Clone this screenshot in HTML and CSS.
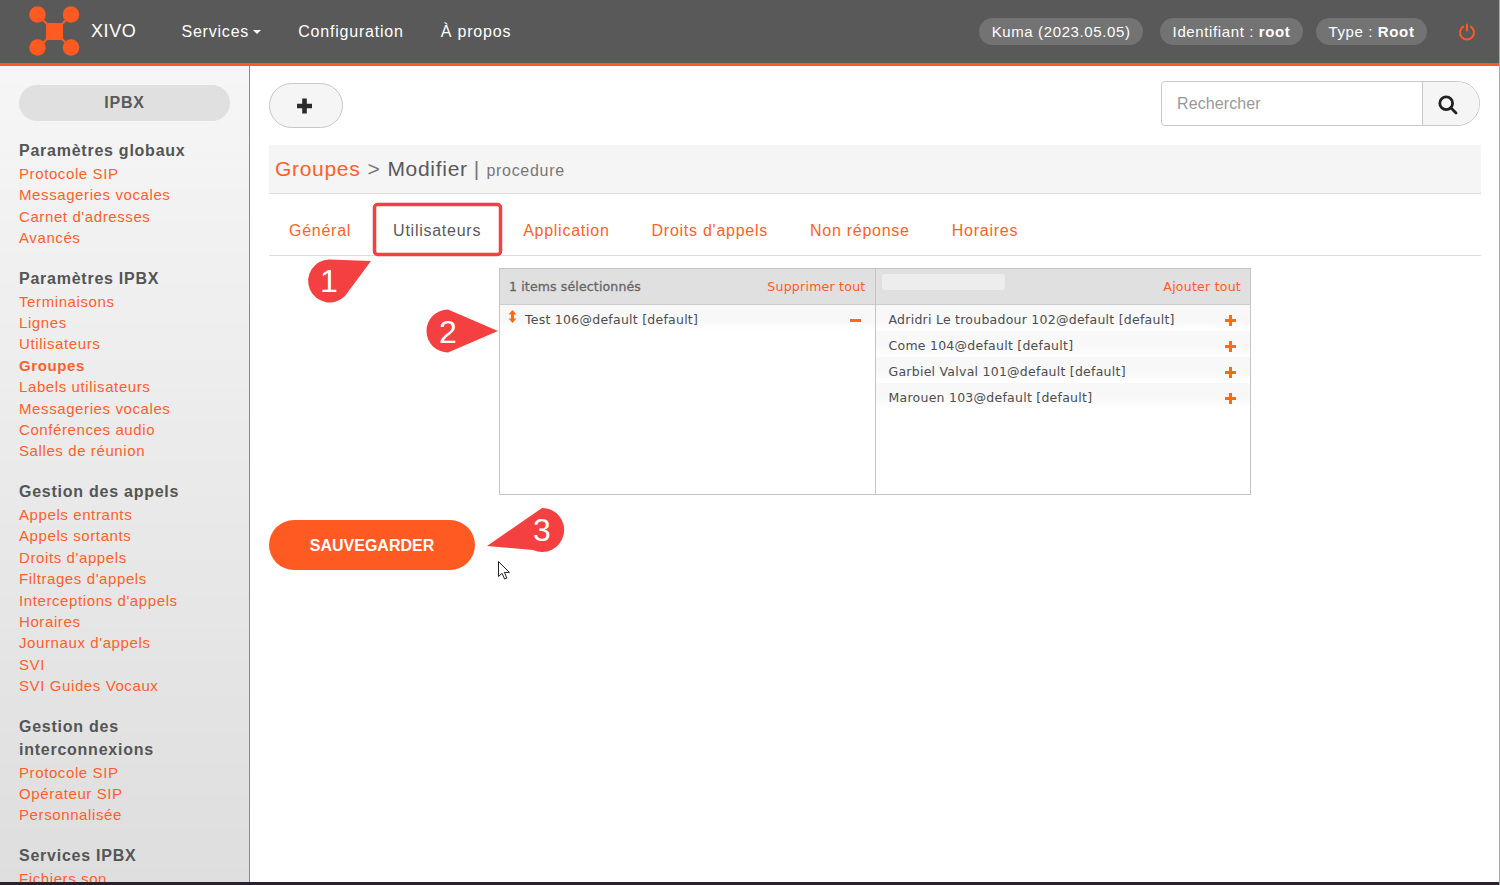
FILE: index.html
```html
<!DOCTYPE html>
<html lang="fr">
  <head>
    <meta charset="UTF-8" />
    <title>XIVO - Groupes</title>
    <link rel="stylesheet" href="styles.css">
  </head>
  <body>
    <div class="page">
      <!-- Top navigation -->
      <header class="topbar">
        <a class="brand">
          <svg class="brand-logo" width="52" height="51" viewBox="0 0 52 51">
            <g stroke="#ff5a22" stroke-width="2"><line x1="8" y1="8" x2="43" y2="43" /><line x1="43" y1="8" x2="8" y2="43" /></g>
            <g fill="#ff5a22">
              <circle cx="8.500" cy="8.500" r="8.300" /><circle cx="42" cy="8.500" r="8.300" /><circle cx="8.500" cy="41.500" r="8.300" /><circle cx="42" cy="41.500" r="8.300" />
              <rect x="17" y="17" width="17" height="17" />
            </g>
          </svg>
          <span>XIVO</span>
        </a>
        <nav class="topnav">
          <a>Services<i class="caret"></i></a>
          <a>Configuration</a>
          <a>À propos</a>
        </nav>
        <div class="topinfo">
          <span class="pill version">Kuma (2023.05.05)</span>
          <span class="pill">Identifiant : <b>root</b></span>
          <span class="pill">Type : <b>Root</b></span>
          <svg class="power" width="18" height="18" viewBox="0 0 18 18" fill="none" stroke="#ff5a22" stroke-width="2" stroke-linecap="round">
            <path d="M5.200 3.600a7 7 0 1 0 7.600 0" /><line x1="9" y1="1.500" x2="9" y2="7.500" />
          </svg>
        </div>
      </header>

      <div class="layout">
        <!-- Left menu -->
        <aside class="sidebar">
          <div class="side-title">IPBX</div>
          <section class="side-group">
            <h4>Paramètres globaux</h4>
            <a>Protocole SIP</a>
            <a>Messageries vocales</a>
            <a>Carnet d'adresses</a>
            <a>Avancés</a>
          </section>
          <section class="side-group">
            <h4>Paramètres IPBX</h4>
            <a>Terminaisons</a>
            <a>Lignes</a>
            <a>Utilisateurs</a>
            <a class="active">Groupes</a>
            <a>Labels utilisateurs</a>
            <a>Messageries vocales</a>
            <a>Conférences audio</a>
            <a>Salles de réunion</a>
          </section>
          <section class="side-group">
            <h4>Gestion des appels</h4>
            <a>Appels entrants</a>
            <a>Appels sortants</a>
            <a>Droits d'appels</a>
            <a>Filtrages d'appels</a>
            <a>Interceptions d'appels</a>
            <a>Horaires</a>
            <a>Journaux d'appels</a>
            <a>SVI</a>
            <a>SVI Guides Vocaux</a>
          </section>
          <section class="side-group">
            <h4>Gestion des interconnexions</h4>
            <a>Protocole SIP</a>
            <a>Opérateur SIP</a>
            <a>Personnalisée</a>
          </section>
          <section class="side-group">
            <h4>Services IPBX</h4>
            <a>Fichiers son</a>
          </section>
        </aside>

        <main class="content">
          <div class="toolbar">
            <button class="btn-add">
              <svg width="17" height="16" viewBox="0 0 17 16"><path d="M6.200 .5h4.600v5.200H16v4.600h-5.200v5.200H6.200v-5.200H1V5.700h5.200z" fill="#2b2b2b" /></svg>
            </button>
            <div class="search">
              <span class="search-input">Rechercher</span>
              <span class="search-btn">
                <svg width="20" height="20" viewBox="0 0 20 20" fill="none" stroke="#222" stroke-width="2.800" stroke-linecap="round">
                  <circle cx="8.200" cy="8.200" r="6.400" /><line x1="12.800" y1="12.800" x2="18" y2="18" />
                </svg>
              </span>
            </div>
          </div>

          <div class="crumb">
            <a>Groupes</a><span class="sep">&gt;</span><span class="crumb-page">Modifier</span><span class="crumb-sub">| <small>procedure</small></span>
          </div>

          <ul class="tabs">
            <li>Général</li>
            <li class="current">Utilisateurs</li>
            <li>Application</li>
            <li>Droits d'appels</li>
            <li>Non réponse</li>
            <li>Horaires</li>
          </ul>

          <!-- Two-column item picker -->
          <div class="picker">
            <div class="picker-col">
              <div class="picker-head">
                <span class="count">1 items sélectionnés</span>
                <a>Supprimer tout</a>
              </div>
              <ul class="picker-list">
                <li>
                  <svg class="drag" width="9" height="13" viewBox="0 0 9 13"><path d="M4.500 0L8.500 4.500H6v4h2.500L4.500 13 .5 8.500H3v-4H.5z" fill="#ff6a13" /></svg>
                  <span>Test 106@default [default]</span>
                  <svg class="act" width="11" height="11" viewBox="0 0 11 11"><rect y="4" width="11" height="3" fill="#ff6a13" /></svg>
                </li>
              </ul>
            </div>
            <div class="picker-col">
              <div class="picker-head">
                <span class="filter"></span>
                <a>Ajouter tout</a>
              </div>
              <ul class="picker-list">
                <li><span>Adridri Le troubadour 102@default [default]</span><svg class="act" width="11" height="11" viewBox="0 0 11 11"><path d="M4 0h3v4h4v3H7v4H4V7H0V4h4z" fill="#ff6a13" /></svg></li>
                <li><span>Come 104@default [default]</span><svg class="act" width="11" height="11" viewBox="0 0 11 11"><path d="M4 0h3v4h4v3H7v4H4V7H0V4h4z" fill="#ff6a13" /></svg></li>
                <li><span>Garbiel Valval 101@default [default]</span><svg class="act" width="11" height="11" viewBox="0 0 11 11"><path d="M4 0h3v4h4v3H7v4H4V7H0V4h4z" fill="#ff6a13" /></svg></li>
                <li><span>Marouen 103@default [default]</span><svg class="act" width="11" height="11" viewBox="0 0 11 11"><path d="M4 0h3v4h4v3H7v4H4V7H0V4h4z" fill="#ff6a13" /></svg></li>
              </ul>
            </div>
          </div>

          <button class="btn-save">SAUVEGARDER</button>
        </main>
      </div>
      <div class="taskbar"></div>

      <!-- Annotations drawn over the screenshot -->
      <svg class="notes" width="1500" height="885" viewBox="0 0 1500 885">
        <rect class="note-box" x="374.500" y="204.500" width="126" height="50" rx="3" />
        <g class="note-mark">
          <path d="M329 259.500L371 261 345 296A21.500 21.500 0 1 1 329 259.500z" />
          <path d="M448 309.500L498 331 448 352.500A21.500 21.500 0 0 1 448 309.500z" />
          <path d="M542 508A22 22 0 1 1 533 550L487 546z" />
        </g>
        <g class="note-num">
          <text x="329" y="292">1</text>
          <text x="448" y="343">2</text>
          <text x="542" y="541">3</text>
        </g>
        <path class="cursor" d="M498.500 561.500v15l3.600-3.200 2.500 5.700 2.300-1-2.500-5.600h5z" />
      </svg>
    </div>
  </body>
</html>
```

FILE: styles.css
```css
* {
  box-sizing: border-box;
}

body {
  margin: 0;
  font-family: "Liberation Sans", Arial, sans-serif;
  background: #fff;
  overflow: hidden;
}

a {
  color: #ff5f2a;
}

ul {
  list-style: none;
  margin: 0;
  padding: 0;
}

.page {
  position: relative;
  display: flex;
  flex-direction: column;
  width: 1500px;
  height: 885px;
  overflow: hidden;
  border-right: 1px solid #a8a8a8;
}

/* Top navigation */
.topbar {
  display: flex;
  align-items: center;
  flex: none;
  height: 66px;
  padding: 0 23px 0 29px;
  background: #595959;
  border-bottom: 3px solid #ff5a22;
  color: #fff;
}

.brand {
  display: flex;
  align-items: center;
  color: #fff;
  font-size: 18px;
  letter-spacing: 0.6px;
}

.brand-logo {
  margin-right: 10px;
}

.topnav {
  display: flex;
  gap: 37px;
  margin-left: 45px;
}

.topnav a {
  color: #fff;
  font-size: 16px;
  letter-spacing: 0.8px;
}

.caret {
  display: inline-block;
  margin-left: 4px;
  vertical-align: 3px;
  border-top: 4px solid #fff;
  border-left: 4.500px solid transparent;
  border-right: 4.500px solid transparent;
}

.topinfo {
  display: flex;
  align-items: center;
  gap: 13px;
  margin-left: auto;
}

.pill {
  height: 27px;
  padding: 0 12.500px;
  border-radius: 14px;
  background: #737373;
  font-size: 15px;
  line-height: 27px;
  letter-spacing: 0.62px;
}

.pill.version {
  margin-right: 4px;
}

.power {
  margin-left: 18px;
}

/* Left menu */
.layout {
  display: flex;
  flex: 1;
  min-height: 0;
}

.sidebar {
  flex: none;
  width: 250px;
  padding: 19px 19px 0;
  overflow: hidden;
  background: linear-gradient(#f6f6f6, #dedede);
  border-right: 1px solid #f0653a;
}

.side-title {
  width: 211px;
  height: 36px;
  margin-bottom: 18px;
  border-radius: 18px;
  background: #e0e0e0;
  color: #595959;
  font-size: 16px;
  font-weight: bold;
  line-height: 35px;
  letter-spacing: 0.8px;
  text-align: center;
}

.side-group {
  margin-bottom: 18px;
}

.side-group h4 {
  margin: 0 0 1px;
  color: #555;
  font-size: 16px;
  line-height: 23px;
  letter-spacing: 0.75px;
}

.side-group a {
  display: block;
  font-size: 15px;
  line-height: 21.400px;
  letter-spacing: 0.6px;
}

.side-group a.active {
  font-weight: bold;
}

/* Main column */
.content {
  flex: 1;
  min-width: 0;
  padding: 15px 18px 0 19px;
}

.toolbar {
  display: flex;
  align-items: flex-start;
  justify-content: space-between;
  height: 64px;
}

.btn-add {
  display: flex;
  align-items: center;
  justify-content: center;
  width: 74px;
  height: 45px;
  margin-top: 2px;
  padding: 0 3px 0 0;
  background: #f5f5f5;
  border: 1px solid #c8c8c8;
  border-radius: 23px;
}

.search {
  display: flex;
  width: 319px;
  height: 45px;
  margin-right: 1px;
  border: 1px solid #c8c8c8;
  border-radius: 4px 23px 23px 4px;
  overflow: hidden;
}

.search-input {
  flex: 1;
  padding-left: 15px;
  color: #999;
  font-size: 16px;
  line-height: 43px;
  letter-spacing: 0.1px;
}

.search-btn {
  display: flex;
  align-items: center;
  justify-content: center;
  width: 57px;
  padding: 3px 7px 0 0;
  background: #f5f5f5;
  border-left: 1px solid #c8c8c8;
}

.crumb {
  display: flex;
  align-items: baseline;
  height: 49px;
  padding: 12px 6px 0;
  background: #f5f5f5;
  border-bottom: 1px solid #ddd;
  color: #595959;
  font-size: 21px;
  letter-spacing: 0.7px;
}

.sep {
  margin: 0 7px;
  color: #777;
}

.crumb-sub {
  margin-left: 6px;
  color: #777;
}

.crumb-sub small {
  font-size: 16px;
}

.tabs {
  display: flex;
  height: 62px;
  padding-top: 12px;
  border-bottom: 1px solid #ddd;
}

.tabs li {
  height: 49px;
  margin-right: 2px;
  padding: 0 20px;
  color: #ff5f2a;
  font-size: 16px;
  line-height: 50px;
  letter-spacing: 0.74px;
}

.tabs li.current {
  color: #595959;
}

/* Item picker */
.picker {
  display: flex;
  width: 752px;
  height: 227px;
  margin: 12px 0 25px 230px;
  border: 1px solid #c4c4c4;
  font-family: "DejaVu Sans", Verdana, sans-serif;
  font-size: 12.500px;
  letter-spacing: 0.25px;
}

.picker-col {
  flex: 1;
}

.picker-col + .picker-col {
  border-left: 1px solid #c4c4c4;
}

.picker-head {
  display: flex;
  align-items: center;
  justify-content: space-between;
  height: 36px;
  padding: 0 9px;
  background: #e0e0e0;
  border-bottom: 1px solid #ccc;
}

.picker-head a {
  color: #ff5a22;
}

.count {
  color: #666;
  letter-spacing: 0.15px;
  -webkit-text-stroke: 0.3px #666;
}

.filter {
  width: 123px;
  height: 16px;
  margin: -10px 0 0 -3px;
  border-radius: 3px;
  background: #ededed;
}

.picker-list li {
  display: flex;
  align-items: center;
  height: 26px;
  padding: 4px 12px 0 13px;
  background: linear-gradient(#f8f8f8, #f8f8f8 60%, #fff);
  color: #4d4d4d;
  border-bottom: 1px solid #fff;
}

.picker-list li span {
  flex: 1;
}

.picker-col:first-child .picker-list li {
  padding-left: 12px;
}

.picker-col:first-child .picker-list li span {
  padding-left: 8px;
}

.drag {
  margin: -6px 0 0 -4px;
}

.act {
  margin: 2px 2px 0 0;
}

.btn-save {
  display: block;
  width: 206px;
  height: 50px;
  padding: 1px 0 0;
  background: #ff5a22;
  border: 0;
  border-radius: 25px;
  color: #fff;
  font-family: "Liberation Sans", Arial, sans-serif;
  font-size: 16px;
  font-weight: bold;
}

.taskbar {
  flex: none;
  height: 3px;
  background: #2b2030;
}

/* Annotations */
.notes {
  position: absolute;
  top: 0;
  left: 0;
  pointer-events: none;
}

.note-box {
  fill: none;
  stroke: #f44040;
  stroke-width: 3.500px;
}

.note-mark {
  fill: #f44040;
}

.note-num {
  fill: #fff;
  font-size: 32px;
  text-anchor: middle;
}

.cursor {
  fill: #fff;
  stroke: #222;
  stroke-width: 1px;
}
```
